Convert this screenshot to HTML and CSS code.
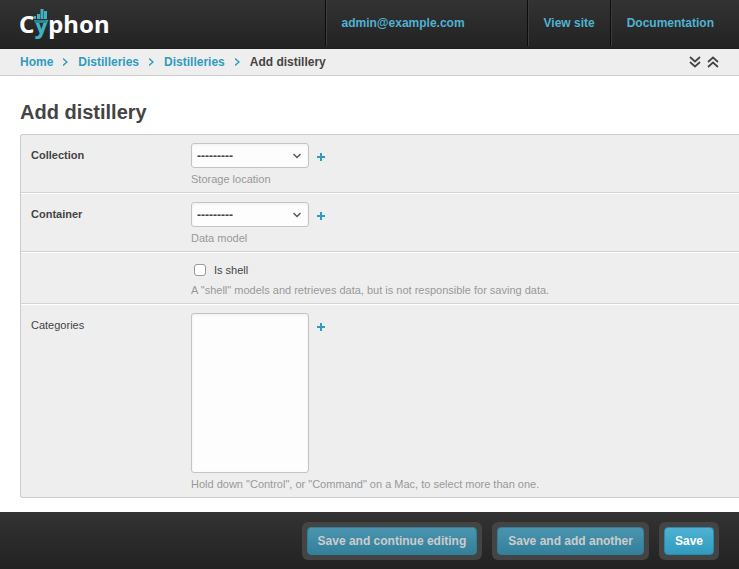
FILE: index.html
```html
<!DOCTYPE html>
<html lang="en">
<head>
<meta charset="utf-8">
<title>Add distillery</title>
<link rel="stylesheet" href="styles.css">
</head>
<body>
<header class="topbar">
  <a class="logo" href="#" aria-label="Cyphon"><span>C</span><span class="logo-y">y<svg class="logo-bars" width="13" height="14" viewBox="0 0 13 14" aria-hidden="true"><path d="M0 7h2v3H0zM3 5h3v5H3zM6.500 0h3v10h-3zM10 2h3v8h-3z" fill="#3eb1c3"/><path d="M0 11h13l-1 3H1z" fill="#2a8895"/></svg></span><span>phon</span></a>
  <nav class="user-tools">
    <a class="user" href="#">admin@example.com</a>
    <a href="#">View site</a>
    <a class="docs" href="#">Documentation</a>
  </nav>
</header>
<div class="crumb-bar">
  <nav class="crumbs" aria-label="Breadcrumbs">
    <a href="#">Home</a>
    <svg class="sep" width="5" height="10" viewBox="0 0 5 10"><path d="M0 1.500l4 3.500-4 3.500"/></svg>
    <a href="#">Distilleries</a>
    <svg class="sep" width="5" height="10" viewBox="0 0 5 10"><path d="M0 1.500l4 3.500-4 3.500"/></svg>
    <a href="#">Distilleries</a>
    <svg class="sep" width="5" height="10" viewBox="0 0 5 10"><path d="M0 1.500l4 3.500-4 3.500"/></svg>
    <span>Add distillery</span>
  </nav>
  <div class="toggles">
    <button type="button" aria-label="Open all"><svg width="12" height="12" viewBox="0 0 12 12"><path d="M1 1l5 4.500L11 1M1 6l5 4.500L11 6"/></svg></button>
    <button type="button" aria-label="Close all"><svg width="12" height="12" viewBox="0 0 12 12"><path d="M1 6l5-4.500L11 6M1 11l5-4.500 5 4.500"/></svg></button>
  </div>
</div>
<form class="page">
  <main class="content">
    <h1>Add distillery</h1>
    <div class="module">
      <div class="row">
        <label class="name required" for="collection">Collection</label>
        <div class="field">
          <div class="control">
            <select id="collection"><option>---------</option></select>
            <a class="add" href="#" aria-label="Add collection"><svg width="8" height="8" viewBox="0 0 8 8"><path d="M3 0h2v3h3v2H5v3H3V5H0V3h3z"/></svg></a>
          </div>
          <p class="help">Storage location</p>
        </div>
      </div>
      <div class="row">
        <label class="name required" for="container">Container</label>
        <div class="field">
          <div class="control">
            <select id="container"><option>---------</option></select>
            <a class="add" href="#" aria-label="Add container"><svg width="8" height="8" viewBox="0 0 8 8"><path d="M3 0h2v3h3v2H5v3H3V5H0V3h3z"/></svg></a>
          </div>
          <p class="help">Data model</p>
        </div>
      </div>
      <div class="row">
        <div></div>
        <div class="field">
          <label class="check"><input type="checkbox">Is shell</label>
          <p class="help">A "shell" models and retrieves data, but is not responsible for saving data.</p>
        </div>
      </div>
      <div class="row">
        <label class="name" for="categories">Categories</label>
        <div class="field">
          <div class="control">
            <select id="categories" multiple></select>
            <a class="add" href="#" aria-label="Add category"><svg width="8" height="8" viewBox="0 0 8 8"><path d="M3 0h2v3h3v2H5v3H3V5H0V3h3z"/></svg></a>
          </div>
          <p class="help">Hold down "Control", or "Command" on a Mac, to select more than one.</p>
        </div>
      </div>
    </div>
  </main>
  <footer class="submit-row">
    <div class="frame"><button class="secondary" type="submit">Save and continue editing</button></div>
    <div class="frame"><button class="secondary" type="submit">Save and add another</button></div>
    <div class="frame"><button type="submit">Save</button></div>
  </footer>
</form>
</body>
</html>
```
FILE: styles.css
```css
* {
  box-sizing: border-box;
}

body {
  display: flex;
  flex-direction: column;
  min-height: 100vh;
  margin: 0;
  background: #fff;
  color: #444;
  font: 11px/14px "Liberation Sans", Arial, sans-serif;
}

a {
  color: #309bbf;
  text-decoration: none;
}

button {
  font: inherit;
  cursor: pointer;
}

.topbar {
  display: flex;
  justify-content: space-between;
  height: 49px;
  padding-left: 19px;
  border-bottom: 1px solid #1c1c1c;
  background: linear-gradient(#333, #222);
}

.logo {
  display: flex;
  color: #fff;
  font: bold 24px/48px "Noto Sans", sans-serif;
}

.logo-y {
  position: relative;
  color: #3eb1c3;
}

.logo-bars {
  position: absolute;
  top: 9px;
  left: 0;
}

.user-tools {
  display: flex;
  height: 46px;
  font-size: 12px;
  font-weight: bold;
  line-height: 46px;
}

.user-tools a {
  padding: 0 15px 0 16px;
  border-left: 1px solid #0c0c0c;
  box-shadow: inset 1px 0 #3c3c3c;
  color: #4fb2d3;
}

.user-tools .user {
  width: 202px;
}

.user-tools .docs {
  padding-right: 25px;
}

.crumb-bar {
  display: flex;
  align-items: center;
  justify-content: space-between;
  height: 27px;
  padding: 0 20px;
  border-bottom: 1px solid #ccc;
  background: #eee;
  font-size: 12px;
  font-weight: bold;
}

.crumbs {
  display: flex;
  align-items: center;
  gap: 10px;
}

.sep {
  fill: none;
  stroke: #309bbf;
  stroke-width: 1.5;
}

.toggles {
  display: flex;
  gap: 6px;
}

.toggles button {
  display: flex;
  padding: 0;
  border: 0;
  background: none;
}

.toggles svg {
  fill: none;
  stroke: #444;
  stroke-width: 1.7;
}

.page {
  display: flex;
  flex: 1;
  flex-direction: column;
}

.content {
  flex: 1;
  padding: 24px 0 14px 20px;
}

h1 {
  margin: 0 0 10px;
  font-size: 20px;
  line-height: 24px;
}

.module {
  border: 1px solid #ccc;
  border-right: 0;
  border-radius: 3px 0 0 3px;
  background: #eee;
}

.row {
  display: grid;
  grid-template-columns: 160px 1fr;
  padding: 8px 10px 6px;
  border-top: 1px solid #fff;
  border-bottom: 1px solid #d4d4d4;
}

.row:first-child {
  border-top: 0;
}

.row:last-child {
  border-bottom: 0;
}

.name {
  padding-top: 5px;
}

.required {
  font-weight: bold;
}

.control {
  display: flex;
  gap: 8px;
}

select {
  width: 118px;
  height: 25px;
  margin: 0;
  padding: 0 5px;
  border: 1px solid #c4c4c4;
  border-radius: 3px;
  outline: 0;
  appearance: none;
  background: #fdfdfd url('data:image/svg+xml,<svg xmlns="http://www.w3.org/2000/svg" width="8" height="6" viewBox="0 0 8 6"><path d="M.5 1L4 4.500 7.500 1" fill="none" stroke="%23555" stroke-width="1.500"/></svg>') no-repeat right 7px center;
  box-shadow: inset 0 1px 3px #eee;
  color: #444;
  font: bold 12px "Liberation Sans", Arial, sans-serif;
}

select[multiple] {
  height: 160px;
  background-image: none;
}

.add {
  padding-top: 10px;
}

.add svg {
  display: block;
  fill: #309bbf;
}

.check {
  display: flex;
  align-items: center;
  gap: 8px;
  height: 18px;
}

.check input {
  width: 12px;
  height: 12px;
  margin: 0 0 0 3px;
  border: 1px solid #999;
  border-radius: 3px;
  appearance: none;
  background: #fff;
}

.check input:checked {
  background: #309bbf;
}

.help {
  margin: 4px 0 0;
  color: #999;
}

.submit-row {
  display: flex;
  justify-content: flex-end;
  gap: 10px;
  padding: 10px 20px 9px;
  background: linear-gradient(#333, #222);
}

.frame {
  padding: 5px;
  border-radius: 6px;
  background: #444;
}

.frame button {
  height: 28px;
  padding: 0 10px;
  border: 1px solid #2b8aab;
  border-radius: 4px;
  background: linear-gradient(#4fb2d3, #309bbf);
  color: #fff;
  font-size: 12px;
  font-weight: bold;
}

.frame .secondary {
  border-color: #2f7f99;
  background: linear-gradient(#4a94ae, #33809b);
  color: #ccc;
}
```
